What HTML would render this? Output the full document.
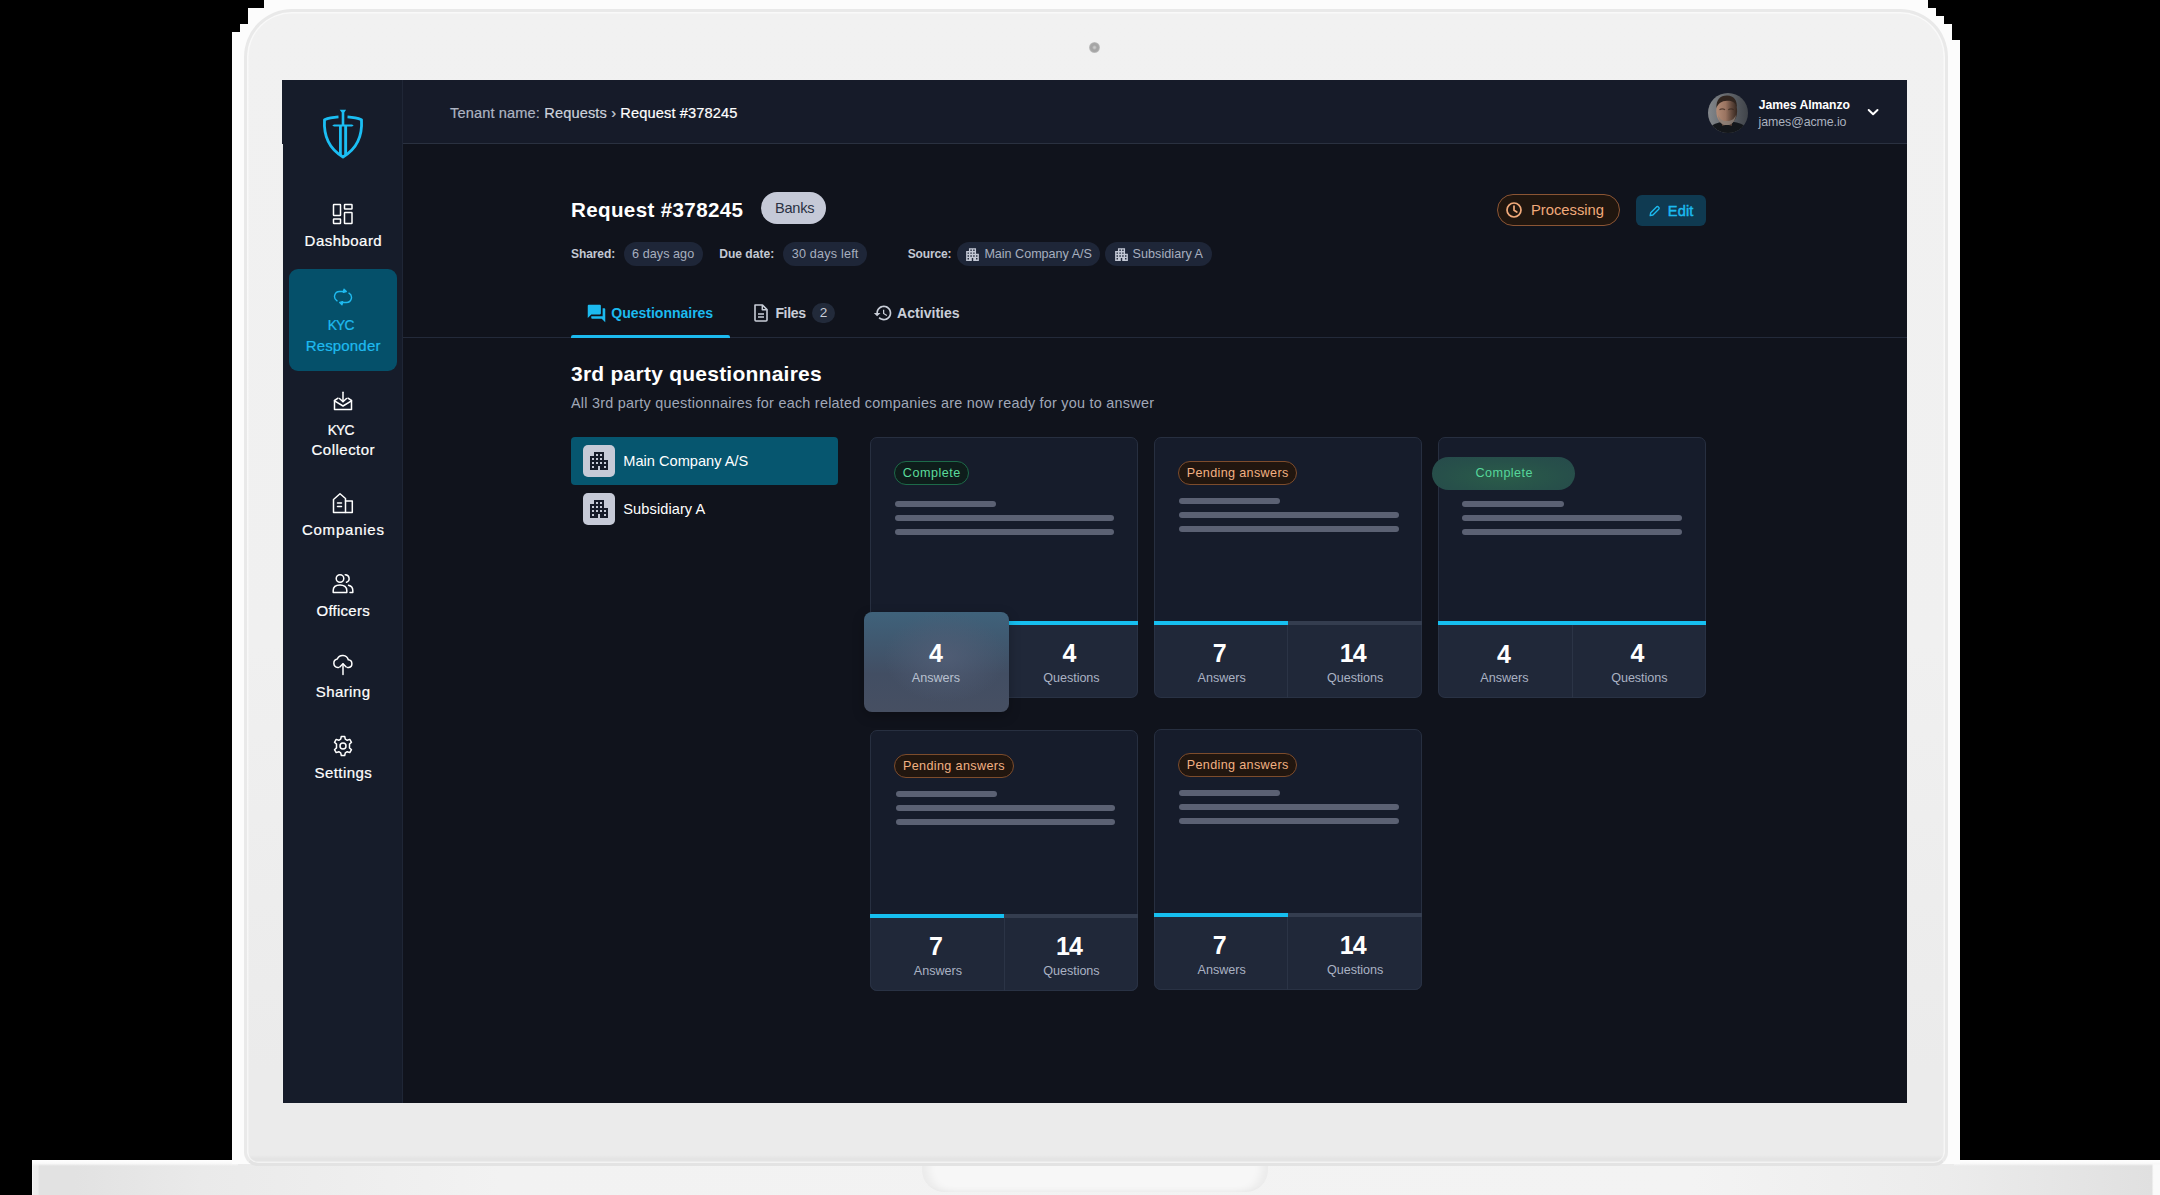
<!DOCTYPE html>
<html>
<head>
<meta charset="utf-8">
<title>Request #378245</title>
<style>
*{box-sizing:border-box;margin:0;padding:0}
html,body{width:2160px;height:1195px;background:#000}
body{font-family:"Liberation Sans",sans-serif;color:#fff;position:relative}
.abs{position:absolute}
#stage{position:absolute;left:0;top:0;width:2160px;height:1195px;background:#000;overflow:hidden}
/* ---------- laptop frame ---------- */
#lidwhite{position:absolute;left:232px;top:0;width:1728px;height:1164px;background:#fcfcfc}
#lid{position:absolute;left:244px;top:9px;width:1704px;height:1157px;border:3px solid #e9e9e9;border-bottom-color:#e3e3e3;border-radius:48px 48px 14px 14px;box-shadow:inset 0 0 0 1.500px rgba(255,255,255,.55);background:linear-gradient(#f1f1f1 0%,#f0f0f0 55%,#ebebeb 92%,#ebebeb 99.3%,#e4e4e4 99.6%)}
.blk{position:absolute;background:#000}
#base{position:absolute;left:32px;top:1160px;width:2128px;height:35px;background:linear-gradient(90deg,#fbfbfb 0,#ededed .06%,#ececec .28%,#e2e2e2 .34%,#e2e2e2 2%,#eaeaea 8%,#f2f2f2 22%,#f3f3f3 78%,#ececec 90%,#e0e0e0 99.6%,#fafafa 99.7%)}
.basetop{position:absolute;top:1160px;height:6px;background:linear-gradient(#ffffff,#f8f8f8 60%,rgba(245,245,245,0))}
#notch{position:absolute;left:922px;top:1166px;width:346px;height:26px;border-radius:0 0 22px 22px;background:#f7f7f7;box-shadow:inset 10px -3px 8px -4px rgba(0,0,0,.05), inset -10px -3px 8px -4px rgba(0,0,0,.05)}
#cam{position:absolute;left:1088.6px;top:42.1px;width:11.400px;height:11.400px;border-radius:50%;background:radial-gradient(circle,#cacaca 0,#c4c4c4 12%,#a3a3a3 32%,#a8a8a8 55%,#d6d6d6 78%,rgba(241,241,241,0) 100%)}
/* ---------- screen ---------- */
#screen{position:absolute;left:282px;top:80px;width:1625px;height:1023px;background:#10131c;overflow:hidden}
#side{position:absolute;left:0;top:0;width:121px;height:1023px;background:#161c2a;border-right:1px solid #1f2636}
#head{position:absolute;left:121px;top:0;width:1504px;height:64px;background:#161b29;border-bottom:1px solid #2a3140}
#tabline{position:absolute;left:121px;top:257px;width:1504px;height:1px;background:#232a3a}

/* sidebar */
.nav{position:absolute;left:0;width:120px;text-align:center;font-size:15.5px;letter-spacing:.55px;color:#fff;line-height:19px;white-space:nowrap}
.nav svg{position:absolute;left:50%;transform:translateX(-50%)}
.ico{fill:none;stroke:#fff;stroke-width:1.5;stroke-linecap:round;stroke-linejoin:round}
#active{position:absolute;left:7px;top:189px;width:108px;height:102px;border-radius:9px;background:#05506a}
.cy{color:#1fbaef}








/*MAINCSS*/
.t{position:absolute;white-space:nowrap}
/*/MAINCSS*/
</style>
</head>
<body>
<div id="stage">
  <div id="base"></div>
  <div class="basetop" style="left:32px;width:206px"></div>
  <div class="basetop" style="left:1954px;width:206px"></div>
  <div id="lidwhite"></div>
  <div id="lid"></div>
  <!-- stair-stepped transparent corners (raw rgb is black) -->
  <div class="blk" style="left:232px;top:0;width:32px;height:8px"></div>
  <div class="blk" style="left:232px;top:8px;width:16px;height:16px"></div>
  <div class="blk" style="left:232px;top:24px;width:8px;height:8px"></div>
  <div class="blk" style="left:1928px;top:0;width:32px;height:8px"></div>
  <div class="blk" style="left:1936px;top:8px;width:24px;height:8px"></div>
  <div class="blk" style="left:1944px;top:16px;width:16px;height:8px"></div>
  <div class="blk" style="left:1952px;top:24px;width:8px;height:16px"></div>
  <div id="notch"></div>
  <div id="cam"></div>

  <div id="screen">
    <div id="lstrip" class="abs" style="left:0;top:64px;width:1px;height:959px;background:#eeeeee;z-index:5"></div>
    <div id="side">
      <!-- logo -->
      <svg class="abs" style="left:39px;top:28px" width="44" height="52" viewBox="0 0 44 52">
        <path d="M17.500 8.900 C12 9.300 7.200 10.200 3.500 11.700 C2.700 24.500 6.200 39.800 22 49 C37.800 39.800 41.300 24.500 40.500 11.700 C36.800 10.200 32 9.300 26.500 8.900" fill="none" stroke="#1bbef3" stroke-width="2.800" stroke-linejoin="round"/>
        <path d="M18.700 1.700 L25.100 1.700 L23.300 4.400 L23.300 17 L20.700 17 L20.700 4.400 Z" fill="#1bbef3"/>
        <path d="M11.200 17.500 L13 16.500 H31 L32.700 17.500 L31 18.400 H13 Z" fill="#1bbef3"/>
        <path d="M18 18 H20.800 V47.500 L18 45.800 Z M23.200 18 H26.100 V45.800 L23.200 47.500 Z" fill="#1bbef3"/>
      </svg>
      <!-- dashboard -->
      <svg class="abs ico" style="left:50px;top:123px" width="22" height="22" viewBox="0 0 22 22">
        <rect x="1.500" y="1.500" width="7" height="11" rx=".5"/><rect x="12.500" y="1.500" width="7.500" height="4.500" rx=".5"/>
        <rect x="1.500" y="16" width="7" height="4.500" rx=".5"/><rect x="12.500" y="9.500" width="7.500" height="11" rx=".5"/>
      </svg>
      <div id="active"></div>
      <!-- sync -->
      <svg class="abs ico" style="left:51px;top:207px;stroke:#1fbaef;stroke-width:1.400" width="20" height="20" viewBox="0 0 20 20">
        <path d="M11.500 4.500 H6.500 A5 5 0 0 0 4 13.800"/><path d="M8.500 15.500 H13.500 A5 5 0 0 0 16 6.200"/>
        <path d="M11 2.300 L13.300 4.600 L10.300 5.200 Z"/><path d="M9 17.700 L6.700 15.400 L9.700 14.800 Z"/>
      </svg>
      <!-- collector -->
      <svg class="abs ico" style="left:50px;top:311px" width="22" height="20" viewBox="0 0 22 20">
        <path d="M6 7.200 L2.500 9.500 V18.500 H19.500 V9.500 L16 7.200"/><path d="M2.500 9.800 L11 15 L19.500 9.800"/>
        <path d="M11 1.200 V10.500"/><path d="M7.500 7.500 L11 10.800 L14.500 7.500"/>
      </svg>
      <!-- companies -->
      <svg class="abs ico" style="left:50px;top:412px" width="22" height="22" viewBox="0 0 22 22">
        <path d="M1.500 20.500 V7.500 L8 1.800 L13.500 6.500 V20.500 Z"/><path d="M13.500 9 H20.300 V20.500 H13.500"/>
        <path d="M5.500 11 H9.500 M5.500 14.500 H9.500"/>
      </svg>
      <!-- officers -->
      <svg class="abs ico" style="left:50px;top:493px" width="22" height="21" viewBox="0 0 22 21">
        <circle cx="8" cy="5.500" r="3.800"/><path d="M1.200 19.500 V17.500 C1.200 14 4 12 8 12 C12 12 14.800 14 14.800 17.500 V19.500 Z"/>
        <path d="M13.200 1.800 A3.800 3.800 0 0 1 14.500 9.200"/><path d="M16.500 12.300 C19.200 13 20.800 14.800 20.800 17.500 V19.500 H18"/>
      </svg>
      <!-- sharing -->
      <svg class="abs ico" style="left:50px;top:574px" width="22" height="22" viewBox="0 0 22 22">
        <path d="M6.500 13.500 H5.800 A4.300 4.300 0 0 1 5.300 5 A5.800 5.800 0 0 1 16.300 5.800 A3.900 3.900 0 0 1 16.800 13.500 H15.500"/>
        <path d="M11 20.500 V10"/><path d="M7.800 13 L11 9.800 L14.200 13"/>
      </svg>
      <!-- settings -->
      <svg class="abs ico" style="left:50px;top:655px" width="22" height="22" viewBox="0 0 22 22">
        <circle cx="11" cy="11" r="3"/>
        <path d="M9.300 1.500 H12.700 L13.300 4.200 L15.200 5.300 L17.800 4.400 L19.500 7.300 L17.500 9.100 V11.300 V12.900 L19.500 14.700 L17.800 17.600 L15.200 16.700 L13.300 17.800 L12.700 20.500 H9.300 L8.700 17.800 L6.800 16.700 L4.200 17.600 L2.500 14.700 L4.500 12.900 V9.100 L2.500 7.300 L4.200 4.400 L6.800 5.300 L8.700 4.200 Z"/>
      </svg>
    </div>
    <div id="head"></div>
    <div id="tabline"></div>
    <!--MAIN-->
    <svg class="abs" style="left:1425.5px;top:12.5px;" width="40" height="40" viewBox="0 0 40 40"><defs><clipPath id="avc"><circle cx="20" cy="20" r="20"/></clipPath><linearGradient id="avbg" x1="0" x2="1" y1="0" y2="0"><stop offset="0" stop-color="#83878b"/><stop offset=".5" stop-color="#62666b"/><stop offset="1" stop-color="#40444a"/></linearGradient><linearGradient id="avsk" x1="0" x2="1" y1="0" y2="0"><stop offset="0" stop-color="#b48c76"/><stop offset=".45" stop-color="#9a7461"/><stop offset=".72" stop-color="#634a3e"/><stop offset="1" stop-color="#35261f"/></linearGradient></defs><g clip-path="url(#avc)"><rect width="40" height="40" fill="url(#avbg)"/><ellipse cx="20" cy="42" rx="23" ry="13.500" fill="#14171b"/><rect x="14" y="26" width="10" height="7" fill="#5a4236"/><ellipse cx="18.700" cy="18.300" rx="10.400" ry="13.800" fill="url(#avsk)"/><path d="M8.500 15 C8 7 12 2.500 19 2.500 C26 2.500 29.500 7.500 28.800 15 C27.500 10 25 7.500 19 7.800 C13.500 8 10 10.500 8.500 15 Z" fill="#31251f"/><path d="M10 22 C10.500 29 14 32.500 18.500 32.500 C23 32.500 27 29 28 22 C26 26.500 23 28 18.700 28 C14.500 28 12 26.500 10 22 Z" fill="#8a7f78" opacity=".8"/><path d="M11.500 16.800 C13 15.800 15.500 15.800 17 16.800 M20.300 16.800 C21.800 15.800 24.300 15.800 25.800 16.800" stroke="#3a2820" stroke-width="1.300" fill="none" opacity=".75"/><path d="M13 33.500 C16 31.500 22 31.500 25 33.500 L25 36 L13 36 Z" fill="#14171b"/></g></svg>
    <svg class="abs" style="left:1584.0px;top:26.0px;" width="14" height="12" viewBox="0 0 14 12"><path d="M2.700 4 L7.100 8.200 L11.500 4" fill="none" stroke="#fff" stroke-width="2" stroke-linecap="round" stroke-linejoin="round"/></svg>
    <div class="abs" style="left:479.0px;top:112.0px;width:65.4px;height:32.0px;border-radius:16px;background:#c5c9d7"></div>
    <div class="abs" style="left:341.7px;top:162.2px;width:79.1px;height:23.4px;border-radius:12px;background:#1e2638"></div>
    <div class="abs" style="left:501.0px;top:162.2px;width:84.0px;height:23.4px;border-radius:12px;background:#1e2638"></div>
    <div class="abs" style="left:675.0px;top:162.2px;width:143.4px;height:23.4px;border-radius:12px;background:#1e2638"></div>
    <div class="abs" style="left:823.2px;top:162.2px;width:107.1px;height:23.4px;border-radius:12px;background:#1e2638"></div>
    <svg class="abs" style="left:682.1px;top:166.1px;" width="17" height="17" viewBox="0 0 24 24"><path d="M17 11V3H7v4H3v14h8v-4h2v4h8V11h-4zM7 19H5v-2h2v2zm0-4H5v-2h2v2zm0-4H5V9h2v2zm4 4H9v-2h2v2zm0-4H9V9h2v2zm0-4H9V5h2v2zm4 8h-2v-2h2v2zm0-4h-2V9h2v2zm0-4h-2V5h2v2zm4 12h-2v-2h2v2zm0-4h-2v-2h2v2z" fill="#c3c8d5"/></svg>
    <svg class="abs" style="left:830.7px;top:166.1px;" width="17" height="17" viewBox="0 0 24 24"><path d="M17 11V3H7v4H3v14h8v-4h2v4h8V11h-4zM7 19H5v-2h2v2zm0-4H5v-2h2v2zm0-4H5V9h2v2zm4 4H9v-2h2v2zm0-4H9V9h2v2zm0-4H9V5h2v2zm4 8h-2v-2h2v2zm0-4h-2V9h2v2zm0-4h-2V5h2v2zm4 12h-2v-2h2v2zm0-4h-2v-2h2v2z" fill="#c3c8d5"/></svg>
    <div class="abs" style="left:1215.0px;top:114.0px;width:123.0px;height:32.0px;border:1px solid #8b5534;border-radius:16px;background:#20160f"></div>
    <svg class="abs" style="left:1223.0px;top:121.0px;" width="18" height="18" viewBox="0 0 18 18"><circle cx="9" cy="9" r="7" fill="none" stroke="#f1aa7b" stroke-width="1.700"/><path d="M9 5 V9.300 L11.800 11" fill="none" stroke="#f1aa7b" stroke-width="1.700" stroke-linecap="round" stroke-linejoin="round"/></svg>
    <div class="abs" style="left:1354.0px;top:115.0px;width:69.8px;height:31.0px;border-radius:6px;background:#0f3a51"></div>
    <svg class="abs" style="left:1366.3px;top:124.3px;" width="13.5" height="13.5" viewBox="0 0 15 15"><path d="M3 9.700 L9.400 3.300 A1.500 1.500 0 0 1 11.600 3.300 L11.900 3.600 A1.500 1.500 0 0 1 11.900 5.800 L5.500 12.200 L2.400 12.800 Z" fill="none" stroke="#1cbaef" stroke-width="1.500" stroke-linejoin="round"/></svg>
    <svg class="abs" style="left:304.3px;top:223.0px;" width="21" height="21" viewBox="0 0 24 24"><path d="M21 6h-2v9H6v2c0 .55.45 1 1 1h11l4 4V7c0-.55-.45-1-1-1zm-4 6V3c0-.55-.45-1-1-1H3c-.55 0-1 .45-1 1v14l4-4h10c.55 0 1-.45 1-1z" fill="#1cbaef"/></svg>
    <div class="abs" style="left:288.8px;top:255.2px;width:159.5px;height:2.4px;background:#1cbaef;border-radius:2px 2px 0 0"></div>
    <svg class="abs" style="left:470.0px;top:223.0px;" width="18" height="20" viewBox="0 0 18 20"><path d="M3 2 H10.500 L15 6.500 V17 A1 1 0 0 1 14 18 H4 A1 1 0 0 1 3 17 Z" fill="none" stroke="#c9ced8" stroke-width="1.600" stroke-linejoin="round"/><path d="M10.300 2.300 V6.700 H14.700" fill="none" stroke="#c9ced8" stroke-width="1.500" stroke-linejoin="round"/><path d="M6 11 H12 M6 14 H12" stroke="#c9ced8" stroke-width="1.500"/></svg>
    <div class="abs" style="left:529.5px;top:222.6px;width:23.4px;height:20.8px;border-radius:10.400px;background:#222a3a"></div>
    <svg class="abs" style="left:590.8px;top:223.0px;" width="20" height="20" viewBox="0 0 24 24"><path d="M13 3c-4.970 0-9 4.030-9 9H1l3.890 3.890.07.14L9 12H6c0-3.870 3.130-7 7-7s7 3.130 7 7-3.130 7-7 7c-1.930 0-3.680-.79-4.940-2.060l-1.420 1.420C8.270 19.990 10.510 21 13 21c4.970 0 9-4.030 9-9s-4.030-9-9-9zm-1 5v5l4.280 2.540.72-1.210-3.500-2.080V8H12z" fill="#c9ced8"/></svg>
    <div class="abs" style="left:289.0px;top:357.0px;width:267.3px;height:48.0px;border-radius:4px;background:#06566f"></div>
    <div class="abs" style="left:300.8px;top:365.0px;width:32.0px;height:32.0px;border-radius:5px;background:#c6cad7"></div>
    <svg class="abs" style="left:304.7px;top:369.2px;" width="24" height="24" viewBox="0 0 24 24"><path d="M17 11V3H7v4H3v14h8v-4h2v4h8V11h-4zM7 19H5v-2h2v2zm0-4H5v-2h2v2zm0-4H5V9h2v2zm4 4H9v-2h2v2zm0-4H9V9h2v2zm0-4H9V5h2v2zm4 8h-2v-2h2v2zm0-4h-2V9h2v2zm0-4h-2V5h2v2zm4 12h-2v-2h2v2zm0-4h-2v-2h2v2z" fill="#161b29"/></svg>
    <div class="abs" style="left:300.8px;top:413.0px;width:32.0px;height:32.0px;border-radius:5px;background:#c6cad7"></div>
    <svg class="abs" style="left:304.7px;top:417.2px;" width="24" height="24" viewBox="0 0 24 24"><path d="M17 11V3H7v4H3v14h8v-4h2v4h8V11h-4zM7 19H5v-2h2v2zm0-4H5v-2h2v2zm0-4H5V9h2v2zm4 4H9v-2h2v2zm0-4H9V9h2v2zm0-4H9V5h2v2zm4 8h-2v-2h2v2zm0-4h-2V9h2v2zm0-4h-2V5h2v2zm4 12h-2v-2h2v2zm0-4h-2v-2h2v2z" fill="#161b29"/></svg>
    <div class="abs" style="left:588.3px;top:357.2px;width:267.7px;height:260.3px;border:1px solid #272f40;border-radius:7px;background:#161c2b"></div>
    <div class="abs" style="left:588.3px;top:545.0px;width:267.7px;height:72.5px;border:1px solid #293244;border-top:none;border-radius:0 0 7px 7px;background:#202839"></div>
    <div class="abs" style="left:721.6px;top:545.0px;width:1.0px;height:72.5px;background:#2b3446"></div>
    <div class="abs" style="left:588.3px;top:540.9px;width:267.7px;height:4.2px;background:#343d4f"></div>
    <div class="abs" style="left:588.3px;top:540.9px;width:267.7px;height:4.2px;background:#16bff0"></div>
    <div class="abs" style="left:612.5px;top:421.0px;width:101.3px;height:6.0px;background:#5b6173;border-radius:3px"></div>
    <div class="abs" style="left:612.5px;top:435.0px;width:219.8px;height:6.0px;background:#5b6173;border-radius:3px"></div>
    <div class="abs" style="left:612.5px;top:449.0px;width:219.8px;height:6.0px;background:#5b6173;border-radius:3px"></div>
    <div class="abs" style="left:612.4px;top:381.0px;width:74.2px;height:23.8px;border:1px solid #1d6a49;border-radius:12px;background:#0e1d1b"></div>
    <div class="abs" style="left:872.0px;top:357.2px;width:267.7px;height:260.3px;border:1px solid #272f40;border-radius:7px;background:#161c2b"></div>
    <div class="abs" style="left:872.0px;top:545.0px;width:267.7px;height:72.5px;border:1px solid #293244;border-top:none;border-radius:0 0 7px 7px;background:#202839"></div>
    <div class="abs" style="left:1005.3px;top:545.0px;width:1.0px;height:72.5px;background:#2b3446"></div>
    <div class="abs" style="left:872.0px;top:540.9px;width:267.7px;height:4.2px;background:#343d4f"></div>
    <div class="abs" style="left:872.0px;top:540.9px;width:134.2px;height:4.2px;background:#16bff0"></div>
    <div class="abs" style="left:897.2px;top:418.0px;width:101.3px;height:6.0px;background:#5b6173;border-radius:3px"></div>
    <div class="abs" style="left:897.2px;top:432.0px;width:219.8px;height:6.0px;background:#5b6173;border-radius:3px"></div>
    <div class="abs" style="left:897.2px;top:446.0px;width:219.8px;height:6.0px;background:#5b6173;border-radius:3px"></div>
    <div class="abs" style="left:896.1px;top:381.0px;width:119.3px;height:23.8px;border:1px solid #7d4c2c;border-radius:12px;background:#21160f"></div>
    <div class="abs" style="left:1156.2px;top:357.2px;width:267.7px;height:260.3px;border:1px solid #272f40;border-radius:7px;background:#161c2b"></div>
    <div class="abs" style="left:1156.2px;top:545.0px;width:267.7px;height:72.5px;border:1px solid #293244;border-top:none;border-radius:0 0 7px 7px;background:#202839"></div>
    <div class="abs" style="left:1289.5px;top:545.0px;width:1.0px;height:72.5px;background:#2b3446"></div>
    <div class="abs" style="left:1156.2px;top:540.9px;width:267.7px;height:4.2px;background:#343d4f"></div>
    <div class="abs" style="left:1156.2px;top:540.9px;width:267.7px;height:4.2px;background:#16bff0"></div>
    <div class="abs" style="left:1180.4px;top:421.0px;width:101.3px;height:6.0px;background:#5b6173;border-radius:3px"></div>
    <div class="abs" style="left:1180.4px;top:435.0px;width:219.8px;height:6.0px;background:#5b6173;border-radius:3px"></div>
    <div class="abs" style="left:1180.4px;top:449.0px;width:219.8px;height:6.0px;background:#5b6173;border-radius:3px"></div>
    <div class="abs" style="left:1150.0px;top:377.0px;width:143.0px;height:33.0px;border-radius:17px;background:radial-gradient(ellipse at 50% 60%,#2a5c49 0%,#27504a 60%,#264a4b 100%)"></div>
    <div class="abs" style="left:588.3px;top:650.3px;width:267.7px;height:260.3px;border:1px solid #272f40;border-radius:7px;background:#161c2b"></div>
    <div class="abs" style="left:588.3px;top:838.1px;width:267.7px;height:72.5px;border:1px solid #293244;border-top:none;border-radius:0 0 7px 7px;background:#202839"></div>
    <div class="abs" style="left:721.6px;top:838.1px;width:1.0px;height:72.5px;background:#2b3446"></div>
    <div class="abs" style="left:588.3px;top:834.0px;width:267.7px;height:4.2px;background:#343d4f"></div>
    <div class="abs" style="left:588.3px;top:834.0px;width:134.2px;height:4.2px;background:#16bff0"></div>
    <div class="abs" style="left:613.5px;top:711.1px;width:101.3px;height:6.0px;background:#5b6173;border-radius:3px"></div>
    <div class="abs" style="left:613.5px;top:725.1px;width:219.8px;height:6.0px;background:#5b6173;border-radius:3px"></div>
    <div class="abs" style="left:613.5px;top:739.1px;width:219.8px;height:6.0px;background:#5b6173;border-radius:3px"></div>
    <div class="abs" style="left:612.4px;top:674.1px;width:119.3px;height:23.8px;border:1px solid #7d4c2c;border-radius:12px;background:#21160f"></div>
    <div class="abs" style="left:872.0px;top:649.4px;width:267.7px;height:260.3px;border:1px solid #272f40;border-radius:7px;background:#161c2b"></div>
    <div class="abs" style="left:872.0px;top:837.2px;width:267.7px;height:72.5px;border:1px solid #293244;border-top:none;border-radius:0 0 7px 7px;background:#202839"></div>
    <div class="abs" style="left:1005.3px;top:837.2px;width:1.0px;height:72.5px;background:#2b3446"></div>
    <div class="abs" style="left:872.0px;top:833.1px;width:267.7px;height:4.2px;background:#343d4f"></div>
    <div class="abs" style="left:872.0px;top:833.1px;width:134.2px;height:4.2px;background:#16bff0"></div>
    <div class="abs" style="left:897.2px;top:710.2px;width:101.3px;height:6.0px;background:#5b6173;border-radius:3px"></div>
    <div class="abs" style="left:897.2px;top:724.2px;width:219.8px;height:6.0px;background:#5b6173;border-radius:3px"></div>
    <div class="abs" style="left:897.2px;top:738.2px;width:219.8px;height:6.0px;background:#5b6173;border-radius:3px"></div>
    <div class="abs" style="left:896.1px;top:673.2px;width:119.3px;height:23.8px;border:1px solid #7d4c2c;border-radius:12px;background:#21160f"></div>
    <div class="abs" style="left:582.0px;top:532.0px;width:145.0px;height:99.7px;border-radius:8px;background:radial-gradient(ellipse 42% 45% at 56% 45%,rgba(82,94,118,.85),rgba(82,94,118,0)),linear-gradient(180deg,#3f627b 0%,#40586f 30%,#424e63 62%,#464f62 100%);box-shadow:0 4px 12px rgba(0,0,0,.25)"></div>
    <div class="t" style="left:22.6px;top:151.0px;font-size:15px;line-height:20px;letter-spacing:0.464px;color:#fff;-webkit-text-stroke:.22px currentColor">Dashboard</div>
    <div class="t" style="left:45.7px;top:237.4px;font-size:13.8px;line-height:18px;letter-spacing:-0.838px;color:#1fbaef;-webkit-text-stroke:.22px currentColor">KYC</div>
    <div class="t" style="left:23.7px;top:255.6px;font-size:15px;line-height:20px;letter-spacing:0.164px;color:#1fbaef;-webkit-text-stroke:.22px currentColor">Responder</div>
    <div class="t" style="left:45.7px;top:341.5px;font-size:13.8px;line-height:18px;letter-spacing:-0.838px;color:#fff;-webkit-text-stroke:.22px currentColor">KYC</div>
    <div class="t" style="left:29.5px;top:359.5px;font-size:15px;line-height:20px;letter-spacing:0.489px;color:#fff;-webkit-text-stroke:.22px currentColor">Collector</div>
    <div class="t" style="left:19.9px;top:440.0px;font-size:15px;line-height:20px;letter-spacing:0.778px;color:#fff;-webkit-text-stroke:.22px currentColor">Companies</div>
    <div class="t" style="left:34.5px;top:521.0px;font-size:15px;line-height:20px;letter-spacing:0.256px;color:#fff;-webkit-text-stroke:.22px currentColor">Officers</div>
    <div class="t" style="left:33.7px;top:602.0px;font-size:15px;line-height:20px;letter-spacing:0.433px;color:#fff;-webkit-text-stroke:.22px currentColor">Sharing</div>
    <div class="t" style="left:32.5px;top:683.0px;font-size:15px;line-height:20px;letter-spacing:0.428px;color:#fff;-webkit-text-stroke:.22px currentColor">Settings</div>
    <div class="t" style="left:168.0px;top:23.8px;font-size:14.6px;line-height:19px;letter-spacing:0.135px;color:#fff;-webkit-text-stroke:.2px currentColor"><span style="color:#aeb5c3">Tenant name: </span><span style="color:#cdd2dc">Requests ›</span> Request #378245</div>
    <div class="t" style="left:1476.8px;top:16.9px;font-size:12.2px;line-height:16px;font-weight:700;letter-spacing:-0.039px;color:#fff;">James Almanzo</div>
    <div class="t" style="left:1476.6px;top:33.6px;font-size:12.4px;line-height:16px;letter-spacing:-0.093px;color:#aab1bf;">james@acme.io</div>
    <div class="t" style="left:289.0px;top:115.7px;font-size:20.6px;line-height:27px;font-weight:700;letter-spacing:0.346px;color:#fff;">Request #378245</div>
    <div class="t" style="left:493.0px;top:118.8px;font-size:14.6px;line-height:19px;letter-spacing:-0.266px;color:#2a3142;">Banks</div>
    <div class="t" style="left:289.0px;top:166.0px;font-size:12px;line-height:16px;font-weight:700;letter-spacing:-0.081px;color:#c3c8d3;">Shared:</div>
    <div class="t" style="left:350.0px;top:166.0px;font-size:12.6px;line-height:16px;letter-spacing:0.064px;color:#a7afbf;">6 days ago</div>
    <div class="t" style="left:437.2px;top:166.0px;font-size:12.1px;line-height:16px;font-weight:700;letter-spacing:-0.014px;color:#c3c8d3;">Due date:</div>
    <div class="t" style="left:509.7px;top:166.0px;font-size:12.6px;line-height:16px;letter-spacing:0.207px;color:#a7afbf;">30 days left</div>
    <div class="t" style="left:625.7px;top:166.0px;font-size:12px;line-height:16px;font-weight:700;letter-spacing:-0.131px;color:#c3c8d3;">Source:</div>
    <div class="t" style="left:702.4px;top:166.0px;font-size:12.6px;line-height:16px;letter-spacing:-0.020px;color:#a7afbf;">Main Company A/S</div>
    <div class="t" style="left:850.6px;top:166.0px;font-size:12.6px;line-height:16px;letter-spacing:0.035px;color:#a7afbf;">Subsidiary A</div>
    <div class="t" style="left:329.3px;top:224.0px;font-size:14.1px;line-height:18px;font-weight:700;letter-spacing:-0.055px;color:#1cbaef;">Questionnaires</div>
    <div class="t" style="left:493.4px;top:224.0px;font-size:14.1px;line-height:18px;font-weight:700;letter-spacing:-0.381px;color:#c9ced8;">Files</div>
    <div class="t" style="left:537.7px;top:224.0px;font-size:13.6px;line-height:18px;letter-spacing:0.000px;color:#c9ced8;">2</div>
    <div class="t" style="left:615.1px;top:224.0px;font-size:14.1px;line-height:18px;font-weight:700;letter-spacing:-0.008px;color:#c9ced8;">Activities</div>
    <div class="t" style="left:1249.0px;top:120.5px;font-size:14.8px;line-height:19px;letter-spacing:-0.023px;color:#f1aa7b;">Processing</div>
    <div class="t" style="left:1385.8px;top:121.5px;font-size:14.6px;line-height:19px;letter-spacing:0.115px;color:#1cbaef;-webkit-text-stroke:.45px currentColor">Edit</div>
    <div class="t" style="left:289.0px;top:280.2px;font-size:21px;line-height:27px;font-weight:700;letter-spacing:0.244px;color:#fff;">3rd party questionnaires</div>
    <div class="t" style="left:289.0px;top:313.8px;font-size:14.4px;line-height:19px;letter-spacing:0.249px;color:#a0a8b8;">All 3rd party questionnaires for each related companies are now ready for you to answer</div>
    <div class="t" style="left:341.3px;top:371.5px;font-size:14.6px;line-height:19px;letter-spacing:0.005px;color:#fff;">Main Company A/S</div>
    <div class="t" style="left:341.3px;top:419.5px;font-size:14.6px;line-height:19px;letter-spacing:0.080px;color:#fff;">Subsidiary A</div>
    <div class="t" style="left:620.8px;top:384.5px;font-size:12.6px;line-height:16px;letter-spacing:0.513px;color:#5bdb9b;">Complete</div>
    <div class="t" style="left:646.9px;top:556.6px;font-size:25px;line-height:32px;font-weight:700;letter-spacing:0.000px;color:#fff;">4</div>
    <div class="t" style="left:629.8px;top:589.9px;font-size:12.6px;line-height:16px;letter-spacing:0.001px;color:#b9c1d0;">Answers</div>
    <div class="t" style="left:780.5px;top:556.6px;font-size:25px;line-height:32px;font-weight:700;letter-spacing:0.000px;color:#fff;">4</div>
    <div class="t" style="left:761.3px;top:589.9px;font-size:12.6px;line-height:16px;letter-spacing:-0.050px;color:#aab2c3;">Questions</div>
    <div class="t" style="left:904.7px;top:384.5px;font-size:12.6px;line-height:16px;letter-spacing:0.355px;color:#f2b183;">Pending answers</div>
    <div class="t" style="left:930.8px;top:556.6px;font-size:25px;line-height:32px;font-weight:700;letter-spacing:0.000px;color:#fff;">7</div>
    <div class="t" style="left:915.5px;top:589.9px;font-size:12.6px;line-height:16px;letter-spacing:0.001px;color:#aab2c3;">Answers</div>
    <div class="t" style="left:1057.7px;top:556.6px;font-size:25px;line-height:32px;font-weight:700;letter-spacing:-0.812px;color:#fff;">14</div>
    <div class="t" style="left:1045.0px;top:589.9px;font-size:12.6px;line-height:16px;letter-spacing:-0.050px;color:#aab2c3;">Questions</div>
    <div class="t" style="left:1193.5px;top:384.7px;font-size:12.6px;line-height:16px;letter-spacing:0.442px;color:#56d69a;">Complete</div>
    <div class="t" style="left:1215.0px;top:557.6px;font-size:25px;line-height:32px;font-weight:700;letter-spacing:0.000px;color:#fff;">4</div>
    <div class="t" style="left:1198.3px;top:589.9px;font-size:12.6px;line-height:16px;letter-spacing:0.001px;color:#aab2c3;">Answers</div>
    <div class="t" style="left:1348.4px;top:556.6px;font-size:25px;line-height:32px;font-weight:700;letter-spacing:0.000px;color:#fff;">4</div>
    <div class="t" style="left:1329.2px;top:589.9px;font-size:12.6px;line-height:16px;letter-spacing:-0.050px;color:#aab2c3;">Questions</div>
    <div class="t" style="left:621.0px;top:677.6px;font-size:12.6px;line-height:16px;letter-spacing:0.355px;color:#f2b183;">Pending answers</div>
    <div class="t" style="left:647.1px;top:849.7px;font-size:25px;line-height:32px;font-weight:700;letter-spacing:0.000px;color:#fff;">7</div>
    <div class="t" style="left:631.8px;top:883.0px;font-size:12.6px;line-height:16px;letter-spacing:0.001px;color:#aab2c3;">Answers</div>
    <div class="t" style="left:774.0px;top:849.7px;font-size:25px;line-height:32px;font-weight:700;letter-spacing:-0.812px;color:#fff;">14</div>
    <div class="t" style="left:761.3px;top:883.0px;font-size:12.6px;line-height:16px;letter-spacing:-0.050px;color:#aab2c3;">Questions</div>
    <div class="t" style="left:904.7px;top:676.7px;font-size:12.6px;line-height:16px;letter-spacing:0.355px;color:#f2b183;">Pending answers</div>
    <div class="t" style="left:930.8px;top:848.8px;font-size:25px;line-height:32px;font-weight:700;letter-spacing:0.000px;color:#fff;">7</div>
    <div class="t" style="left:915.5px;top:882.1px;font-size:12.6px;line-height:16px;letter-spacing:0.001px;color:#aab2c3;">Answers</div>
    <div class="t" style="left:1057.7px;top:848.8px;font-size:25px;line-height:32px;font-weight:700;letter-spacing:-0.812px;color:#fff;">14</div>
    <div class="t" style="left:1045.0px;top:882.1px;font-size:12.6px;line-height:16px;letter-spacing:-0.050px;color:#aab2c3;">Questions</div>
    <!--/MAIN-->
    
    
    
    
    
    
    
    
  </div>
</div>
</body>
</html>
